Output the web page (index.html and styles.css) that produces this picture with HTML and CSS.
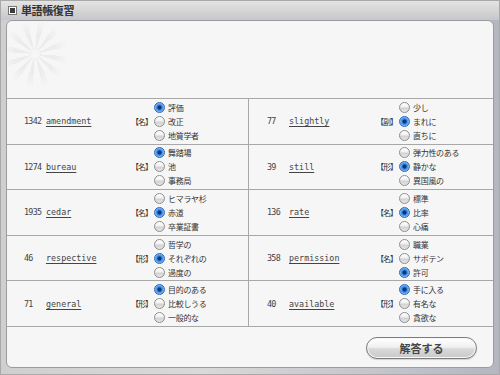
FILE: index.html
```html
<!DOCTYPE html>
<html lang="ja">
<head>
    <meta charset="UTF-8">
    <title>単語帳復習</title>
    <link rel="stylesheet" href="styles.css">
</head>
<body>
    <div class="window">
        <div class="titlebar">
            <span class="title-icon"></span>
            <span class="title-text">単語帳復習</span>
        </div>
        <div class="panel">
            <div class="quiz">
                <div class="cell">
                    <span class="num">1342</span><span class="word">amendment</span><span class="pos">【名】</span>
                    <div class="options">
                        <div class="opt"><span class="radio on"></span>評価</div>
                        <div class="opt"><span class="radio"></span>改正</div>
                        <div class="opt"><span class="radio"></span>地質学者</div>
                    </div>
                </div>
                <div class="cell right">
                    <span class="num">77</span><span class="word">slightly</span><span class="pos">【副】</span>
                    <div class="options">
                        <div class="opt"><span class="radio"></span>少し</div>
                        <div class="opt"><span class="radio on"></span>まれに</div>
                        <div class="opt"><span class="radio"></span>直ちに</div>
                    </div>
                </div>
                <div class="cell">
                    <span class="num">1274</span><span class="word">bureau</span><span class="pos">【名】</span>
                    <div class="options">
                        <div class="opt"><span class="radio on"></span>舞踏場</div>
                        <div class="opt"><span class="radio"></span>池</div>
                        <div class="opt"><span class="radio"></span>事務局</div>
                    </div>
                </div>
                <div class="cell right">
                    <span class="num">39</span><span class="word">still</span><span class="pos">【形】</span>
                    <div class="options">
                        <div class="opt"><span class="radio"></span>弾力性のある</div>
                        <div class="opt"><span class="radio on"></span>静かな</div>
                        <div class="opt"><span class="radio"></span>異国風の</div>
                    </div>
                </div>
                <div class="cell">
                    <span class="num">1935</span><span class="word">cedar</span><span class="pos">【名】</span>
                    <div class="options">
                        <div class="opt"><span class="radio"></span>ヒマラヤ杉</div>
                        <div class="opt"><span class="radio on"></span>赤道</div>
                        <div class="opt"><span class="radio"></span>卒業証書</div>
                    </div>
                </div>
                <div class="cell right">
                    <span class="num">136</span><span class="word">rate</span><span class="pos">【名】</span>
                    <div class="options">
                        <div class="opt"><span class="radio"></span>標準</div>
                        <div class="opt"><span class="radio on"></span>比率</div>
                        <div class="opt"><span class="radio"></span>心痛</div>
                    </div>
                </div>
                <div class="cell">
                    <span class="num">46</span><span class="word">respective</span><span class="pos">【形】</span>
                    <div class="options">
                        <div class="opt"><span class="radio"></span>哲学の</div>
                        <div class="opt"><span class="radio on"></span>それぞれの</div>
                        <div class="opt"><span class="radio"></span>過度の</div>
                    </div>
                </div>
                <div class="cell right">
                    <span class="num">358</span><span class="word">permission</span><span class="pos">【名】</span>
                    <div class="options">
                        <div class="opt"><span class="radio"></span>職業</div>
                        <div class="opt"><span class="radio"></span>サボテン</div>
                        <div class="opt"><span class="radio on"></span>許可</div>
                    </div>
                </div>
                <div class="cell">
                    <span class="num">71</span><span class="word">general</span><span class="pos">【形】</span>
                    <div class="options">
                        <div class="opt"><span class="radio on"></span>目的のある</div>
                        <div class="opt"><span class="radio"></span>比較しうる</div>
                        <div class="opt"><span class="radio"></span>一般的な</div>
                    </div>
                </div>
                <div class="cell right">
                    <span class="num">40</span><span class="word">available</span><span class="pos">【形】</span>
                    <div class="options">
                        <div class="opt"><span class="radio on"></span>手に入る</div>
                        <div class="opt"><span class="radio"></span>有名な</div>
                        <div class="opt"><span class="radio"></span>貪欲な</div>
                    </div>
                </div>
            </div>
            <div class="footer">
                <button class="answer">解答する</button>
            </div>
        </div>
    </div>
</body>
</html>
```

FILE: styles.css
```css
body {
    margin: 0;
    padding: 0;
    font-family: "Noto Sans CJK JP", "DejaVu Sans", sans-serif;
    color: #333;
}
.window {
    width: 500px;
    height: 375px;
    box-sizing: border-box;
    border: 1px solid #a9a9a9;
    background: linear-gradient(to right, #cfcfcf, #d9d9d9 40%, #c4c6cc 75%, #b4b7c0);
}
.titlebar {
    height: 19px;
    display: flex;
    align-items: center;
    padding-left: 7px;
    background: linear-gradient(to bottom, #e4e4e4, #d2d2d4 60%, #c6c7cc);
}
.title-icon {
    width: 5px;
    height: 5px;
    border: 1px solid #fff;
    outline: 1px solid #777;
    background: #3c3c3c;
    margin: 0 5px 0 1px;
}
.title-text {
    font-size: 11px;
    font-weight: bold;
    color: #333;
    letter-spacing: -0.4px;
    line-height: 19px;
}
.panel {
    margin: 0 5px;
    height: 348px;
    box-sizing: border-box;
    border: 1px solid #9c9c9c;
    border-radius: 6px;
    padding-top: 77px;
    background-color: #f6f6f6;
    background-image:
        radial-gradient(circle at 28px 33px, #f6f6f6 0 3px, rgba(246,246,246,0) 6px, rgba(246,246,246,0) 20px, #f6f6f6 34px),
        repeating-conic-gradient(from 4deg at 28px 33px, #ececec 0 13deg, rgba(246,246,246,0) 13deg 30deg);
    background-size: 70px 70px, 70px 70px;
    background-repeat: no-repeat;
    display: flex;
    flex-direction: column;
}
.quiz {
    display: grid;
    grid-template-columns: 242px 1fr;
    border-top: 1px solid #a8a8a8;
}
.cell {
    height: 44.6px;
    border-bottom: 1px solid #a8a8a8;
    border-right: 1px solid #a8a8a8;
    display: flex;
    align-items: center;
    padding-left: 17px;
}
.cell.right {
    border-right: none;
    padding-left: 18px;
}
.num, .word {
    font-family: "DejaVu Sans Mono", monospace;
    font-size: 8.4px;
    color: #444;
}
.num {
    width: 22px;
    flex-shrink: 0;
    letter-spacing: -0.7px;
}
.word {
    flex: 1;
    text-decoration: underline;
    text-underline-offset: 2px;
}
.pos {
    font-size: 8px;
    letter-spacing: -1px;
    margin-right: 2px;
}
.options {
    width: 94px;
    flex-shrink: 0;
    display: flex;
    flex-direction: column;
}
.opt {
    height: 14px;
    display: flex;
    align-items: center;
    font-size: 8px;
    letter-spacing: -0.3px;
    white-space: nowrap;
}
.radio {
    width: 9px;
    height: 9px;
    border: 1px solid #8e8e8e;
    border-radius: 50%;
    margin-right: 3px;
    background: linear-gradient(to bottom, #ffffff, #f0f0f0 45%, #d2d2d2 55%, #e6e6e6);
    flex-shrink: 0;
}
.radio.on {
    border-color: #2d67b8;
    background: radial-gradient(circle, #0c3575 0 1.6px, #2f7fe0 2.4px, #6fb0f2 4px, #a9d3fb);
}
.footer {
    display: flex;
    justify-content: flex-end;
    padding: 10px 16px 0 0;
}
.answer {
    width: 111px;
    height: 22px;
    border: 1px solid #7c7c7c;
    border-radius: 11px;
    background: linear-gradient(to bottom, #ffffff, #f1f1f1 45%, #d9d9d9 55%, #c9c9c9);
    box-shadow: inset 0 0 0 1px #f8f8f8, 0 1px 1px rgba(0,0,0,0.15);
    font-family: "Noto Sans CJK JP", sans-serif;
    font-size: 11px;
    font-weight: bold;
    color: #444;
    padding: 0;
    cursor: pointer;
}
```
